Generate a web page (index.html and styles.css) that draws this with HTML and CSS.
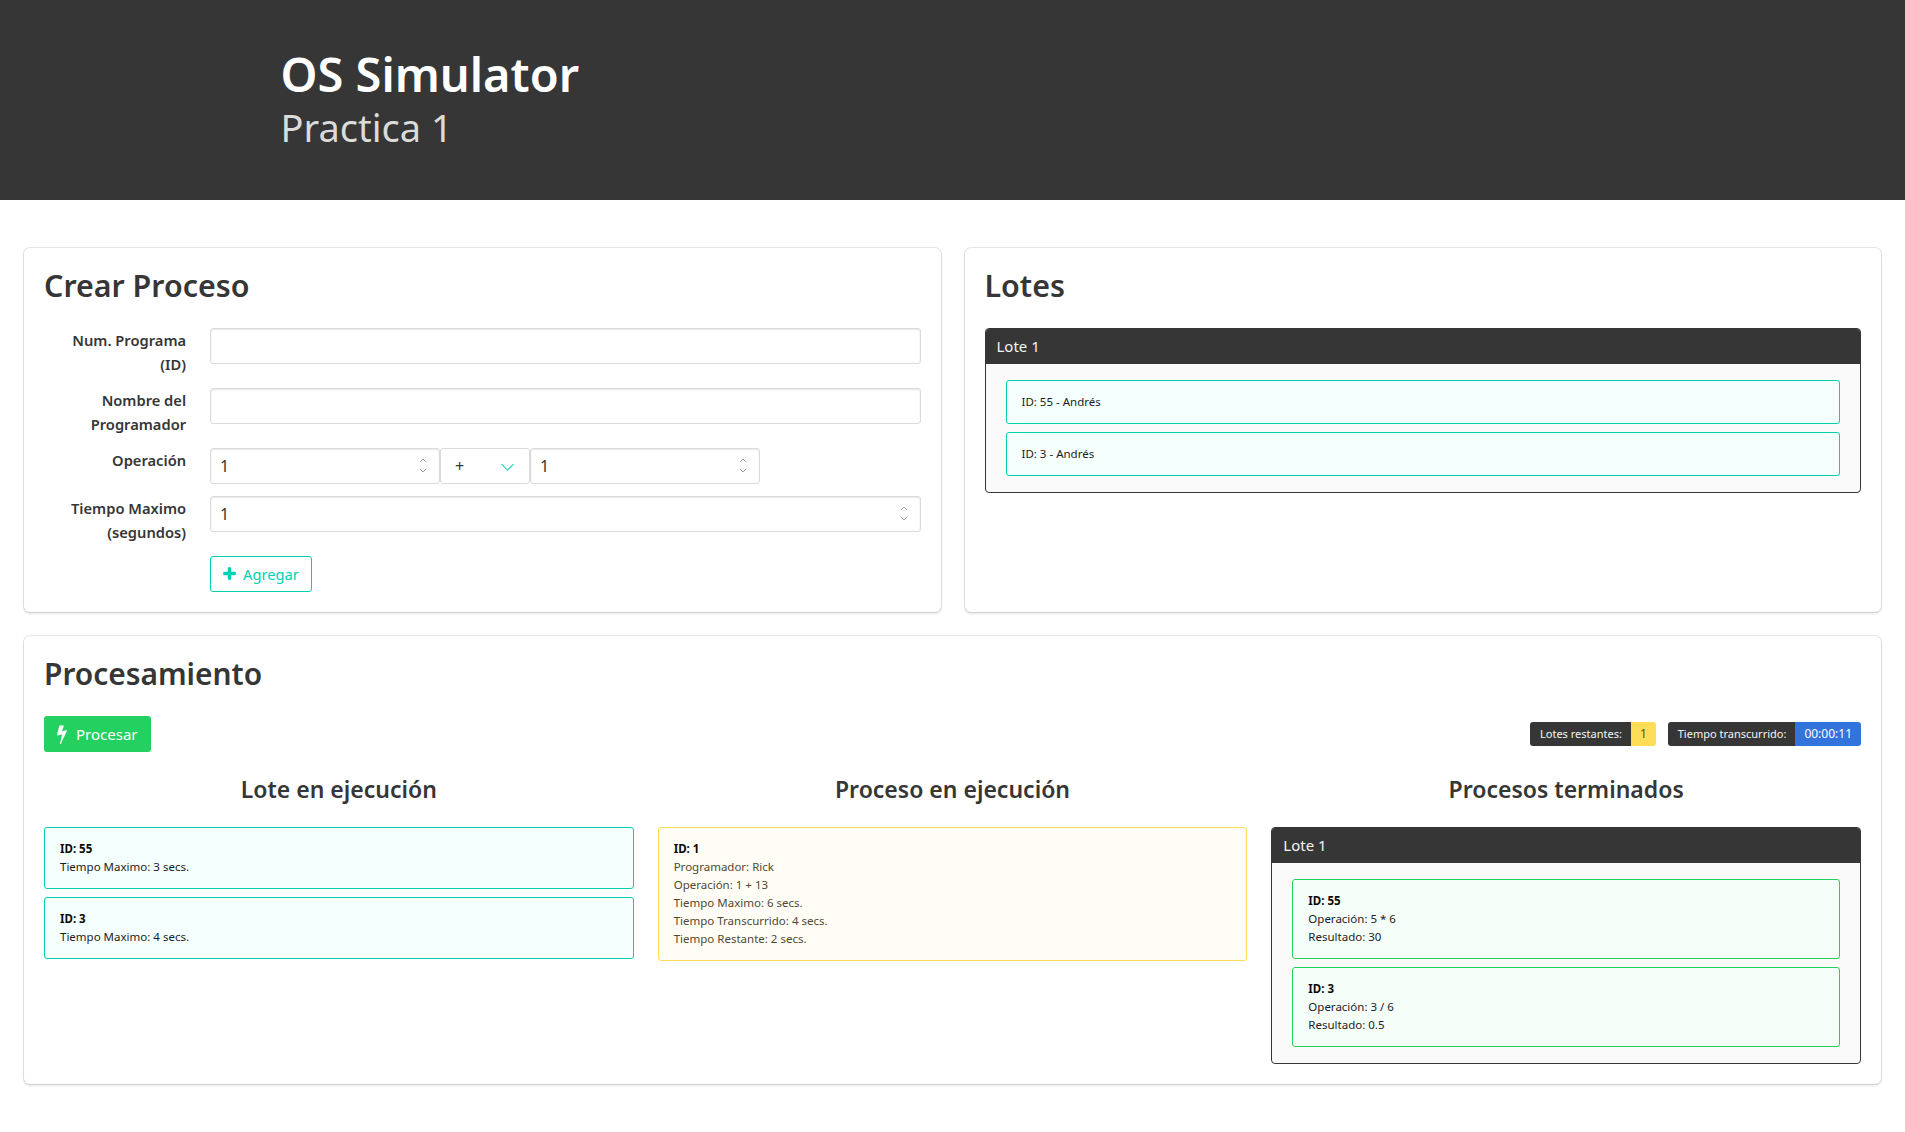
FILE: index.html
```html
<!DOCTYPE html>
<html lang="es">
<head>
<meta charset="utf-8">
<title>OS Simulator</title>
<link rel="stylesheet" href="styles.css">
</head>
<body>
<section class="hero">
  <div class="hero-inner">
    <h1 class="hero-title">OS Simulator</h1>
    <h2 class="hero-subtitle">Practica 1</h2>
  </div>
</section>

<main class="page">
  <div class="top-grid">
    <section class="box">
      <h2 class="title">Crear Proceso</h2>
      <form class="form">
        <div class="field">
          <div class="field-label"><label class="label">Num. Programa (ID)</label></div>
          <div class="field-body"><input class="input" type="text"></div>
        </div>
        <div class="field">
          <div class="field-label"><label class="label">Nombre del Programador</label></div>
          <div class="field-body"><input class="input" type="text"></div>
        </div>
        <div class="field">
          <div class="field-label"><label class="label">Operación</label></div>
          <div class="field-body op-row">
            <div class="control num-control op-num">
              <input class="input" type="text" value="1">
              <svg class="spinner" viewBox="0 0 8 16" aria-hidden="true"><path d="M1 4.5 4 1.5l3 3M1 11.5 4 14.5l3-3"/></svg>
            </div>
            <div class="control select-control">
              <select class="select"><option>+</option><option>-</option><option>*</option><option>/</option></select>
            </div>
            <div class="control num-control op-num">
              <input class="input" type="text" value="1">
              <svg class="spinner" viewBox="0 0 8 16" aria-hidden="true"><path d="M1 4.5 4 1.5l3 3M1 11.5 4 14.5l3-3"/></svg>
            </div>
          </div>
        </div>
        <div class="field">
          <div class="field-label"><label class="label">Tiempo Maximo (segundos)</label></div>
          <div class="field-body">
            <div class="control num-control">
              <input class="input" type="text" value="1">
              <svg class="spinner" viewBox="0 0 8 16" aria-hidden="true"><path d="M1 4.5 4 1.5l3 3M1 11.5 4 14.5l3-3"/></svg>
            </div>
          </div>
        </div>
        <div class="field field-last">
          <div class="field-label"></div>
          <div class="field-body">
            <button class="button button-add" type="button">
              <svg class="btn-icon icon-plus" viewBox="0 0 1408 1792" aria-hidden="true"><path d="M1408 736v192q0 40-28 68t-68 28h-416v416q0 40-28 68t-68 28h-192q-40 0-68-28t-28-68v-416h-416q-40 0-68-28t-28-68v-192q0-40 28-68t68-28h416v-416q0-40 28-68t68-28h192q40 0 68 28t28 68v416h416q40 0 68 28t28 68z"/></svg>
              <span>Agregar</span>
            </button>
          </div>
        </div>
      </form>
    </section>

    <section class="box">
      <h2 class="title">Lotes</h2>
      <div class="panel">
        <div class="panel-heading">Lote 1</div>
        <div class="panel-body">
          <div class="note note-teal">ID: 55 - Andrés</div>
          <div class="note note-teal">ID: 3 - Andrés</div>
        </div>
      </div>
    </section>
  </div>

  <section class="box box-wide">
    <h2 class="title">Procesamiento</h2>
    <div class="toolbar">
      <button class="button button-run" type="button">
        <svg class="btn-icon icon-bolt" viewBox="0 0 896 1792" aria-hidden="true"><path d="M885 566q18 20 7 44l-540 1157q-13 25-42 25-4 0-14-2-17-5-25.5-19t-4.5-30l197-808-406 101q-4 1-12 1-18 0-31-11-18-15-13-39l201-825q4-14 16-23t28-9h328q19 0 32 12.5t13 29.5q0 8-5 18l-171 463 396-98q8-2 12-2 19 0 34 15z"/></svg>
        <span>Procesar</span>
      </button>
      <div class="tag-groups">
        <div class="tags"><span class="tag tag-dark">Lotes restantes:</span><span class="tag tag-warn">1</span></div>
        <div class="tags"><span class="tag tag-dark">Tiempo transcurrido:</span><span class="tag tag-blue">00:00:11</span></div>
      </div>
    </div>
    <div class="columns">
      <div class="column">
        <h3 class="subtitle">Lote en ejecución</h3>
        <div class="note note-teal"><strong>ID: 55</strong><br>Tiempo Maximo: 3 secs.</div>
        <div class="note note-teal"><strong>ID: 3</strong><br>Tiempo Maximo: 4 secs.</div>
      </div>
      <div class="column">
        <h3 class="subtitle">Proceso en ejecución</h3>
        <div class="note note-yellow"><strong>ID: 1</strong><br>Programador: Rick<br>Operación: 1 + 13<br>Tiempo Maximo: 6 secs.<br>Tiempo Transcurrido: 4 secs.<br>Tiempo Restante: 2 secs.</div>
      </div>
      <div class="column">
        <h3 class="subtitle">Procesos terminados</h3>
        <div class="panel">
          <div class="panel-heading">Lote 1</div>
          <div class="panel-body">
            <div class="note note-green"><strong>ID: 55</strong><br>Operación: 5 * 6<br>Resultado: 30</div>
            <div class="note note-green"><strong>ID: 3</strong><br>Operación: 3 / 6<br>Resultado: 0.5</div>
          </div>
        </div>
      </div>
    </div>
  </section>
</main>
</body>
</html>
```
FILE: styles.css
```css
* { box-sizing: border-box; }
html, body { margin: 0; padding: 0; }
body {
  background: #fff;
  color: #4a4a4a;
  font-family: "Noto Sans", "Open Sans", sans-serif;
  font-size: 16px;
  line-height: 24px;
}

.hero { background: #363636; height: 200px; padding: 48px 0; }
.hero-inner { width: 1344px; margin: 0 auto; }
.hero-title { margin: 0 0 2px; color: #fff; font-size: 47px; font-weight: 600; line-height: 52px; }
.hero-subtitle { margin: 0; color: #dbdbdb; font-size: 38px; font-weight: 400; line-height: 50px; }

.page { padding: 48px 24px 24px; display: flex; flex-direction: column; gap: 24px; }
.top-grid { display: grid; grid-template-columns: 1fr 1fr; gap: 24px; }

.box {
  background: #fff;
  border-radius: 6px;
  padding: 20px;
  box-shadow: 0 2px 3px rgba(10,10,10,.1), 0 0 0 1px rgba(10,10,10,.1);
}
.title { margin: 0 0 25px; color: #363636; font-size: 30.4px; font-weight: 600; line-height: 35px; }
.box-wide .title { font-size: 29.9px; }

.field { display: flex; margin-bottom: 12px; }
.field-last { margin-bottom: 0; }
.field-label { flex: 1 1 0; margin-right: 24px; text-align: right; }
.label { display: block; color: #363636; font-weight: 600; font-size: 14.7px; }
.field-body { flex: 5 1 0; min-width: 0; }
.op-row { display: flex; gap: .5px; }

.control { position: relative; }
.op-num { flex: 0 0 229.5px; }
.select-control { flex: 0 0 89.5px; }
.input, .select {
  display: block;
  width: 100%;
  height: 36px;
  padding: 5px 9px;
  border: 1px solid #dbdbdb;
  border-radius: 3px;
  background: #fff;
  color: #363636;
  font: inherit;
  box-shadow: inset 0 1px 2px rgba(10,10,10,.1);
}
.select { appearance: none; box-shadow: none; padding-left: 14px; }
.select-control::after {
  content: "";
  position: absolute;
  top: 12px;
  right: 18px;
  width: 8px;
  height: 8px;
  border-left: 1px solid #00d1b2;
  border-bottom: 1px solid #00d1b2;
  transform: rotate(-45deg);
}
.spinner {
  position: absolute;
  top: 9px;
  right: 13px;
  width: 8px;
  height: 17px;
  fill: none;
  stroke: #a3a3a3;
  stroke-width: 1;
}

.button {
  display: inline-flex;
  align-items: center;
  height: 36px;
  padding: 5px 12px;
  border: 1px solid transparent;
  border-radius: 3px;
  font: inherit;
  font-size: 14.7px;
}
.btn-icon { display: block; flex: none; fill: currentColor; }
.button-add { background: #fff; border-color: #00d1b2; color: #00d1b2; gap: 7px; }
.icon-plus { width: 13px; height: 16px; }
.button-run { background: #23d160; color: #fff; gap: 9px; font-size: 15px; }
.icon-bolt { width: 10px; height: 20px; }

.panel { border: 1px solid #363636; border-radius: 4px; background: #fafafa; overflow: hidden; }
.panel-heading { height: 36px; margin: -1px -1px 0; padding: 6px 12px; background: #363636; color: #f5f5f5; font-size: 15px; }
.panel-body { padding: 16px 20px; display: flex; flex-direction: column; gap: 8px; }

.note {
  border: 1px solid;
  border-radius: 3px;
  padding: 12px 15px;
  font-size: 11.5px;
  line-height: 18px;
  color: #1c1c1c;
}
.note strong { font-weight: 700; color: #0a0a0a; }
.note-teal { background: #f5fffd; border-color: #00d1b2; }
.note-yellow { background: #fffdf5; border-color: #ffdd57; color: #4f4a32; }
.note-green { background: #f6fef9; border-color: #23d160; }

.toolbar { display: flex; align-items: center; justify-content: space-between; margin-bottom: 23px; }
.tag-groups { display: flex; gap: 12px; }
.tags { display: flex; }
.tag { height: 24px; padding: 0 9px; font-size: 11px; line-height: 24px; }
.tags .tag:first-child { border-radius: 3px 0 0 3px; }
.tags .tag:last-child { border-radius: 0 3px 3px 0; }
.tag-dark { background: #363636; color: #f5f5f5; padding-left: 10px; }
.tag-warn { background: #ffdd57; color: rgba(0,0,0,.7); font-size: 12px; }
.tag-blue { background: #3273dc; color: #fff; font-size: 12px; }

.columns { display: grid; grid-template-columns: repeat(3, 1fr); gap: 24px; }
.column { display: flex; flex-direction: column; gap: 8px; }
.subtitle { margin: 0 0 16px; color: #363636; font-size: 23px; font-weight: 600; line-height: 28px; text-align: center; }
```
